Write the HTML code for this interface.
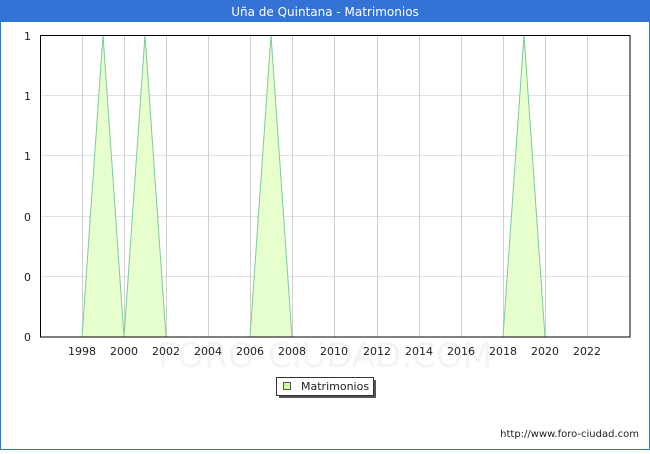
<!DOCTYPE html>
<html><head><meta charset="utf-8"><style>
body{margin:0;width:650px;height:450px;overflow:hidden;background:#fff;font-family:"DejaVu Sans","Liberation Sans",sans-serif}
</style></head><body>
<svg width="650" height="450" xmlns="http://www.w3.org/2000/svg" font-family="DejaVu Sans, Liberation Sans, sans-serif">
<rect x="0.5" y="0.5" width="649" height="449" fill="#fff" stroke="#3373d6"/>
<rect x="0" y="0" width="650" height="22" fill="#3373d6"/>
<text x="325" y="16" fill="#fff" font-size="12" text-anchor="middle">Uña de Quintana - Matrimonios</text>
<text x="325" y="367" fill="#f2f4f8" font-size="34" text-anchor="middle">FORO-CIUDAD.COM</text>
<g stroke="#e0e0e0" stroke-width="1">
<line x1="40" y1="95.5" x2="630" y2="95.5"/><line x1="40" y1="155.5" x2="630" y2="155.5"/><line x1="40" y1="216.5" x2="630" y2="216.5"/><line x1="40" y1="276.5" x2="630" y2="276.5"/>
</g>
<g stroke="#d0d0d0" stroke-width="1">
<line x1="82.5" y1="35" x2="82.5" y2="337"/><line x1="124.5" y1="35" x2="124.5" y2="337"/><line x1="166.5" y1="35" x2="166.5" y2="337"/><line x1="208.5" y1="35" x2="208.5" y2="337"/><line x1="250.5" y1="35" x2="250.5" y2="337"/><line x1="292.5" y1="35" x2="292.5" y2="337"/><line x1="334.5" y1="35" x2="334.5" y2="337"/><line x1="377.5" y1="35" x2="377.5" y2="337"/><line x1="419.5" y1="35" x2="419.5" y2="337"/><line x1="461.5" y1="35" x2="461.5" y2="337"/><line x1="503.5" y1="35" x2="503.5" y2="337"/><line x1="545.5" y1="35" x2="545.5" y2="337"/><line x1="587.5" y1="35" x2="587.5" y2="337"/>
</g>
<g fill="#e6ffcc" stroke="#80c8a0" stroke-width="1">
<polygon points="82,337 103,35 124,337"/>
<polygon points="124,337 145,35 166,337"/>
<polygon points="250,337 271,35 292,337"/>
<polygon points="503,337 524,35 545,337"/>
</g>
<rect x="40.5" y="35.5" width="589.5" height="301.5" fill="none" stroke="#000"/>
<g font-size="11" fill="#222" text-anchor="end">
<text x="31" y="40">1</text><text x="31" y="100">1</text><text x="31" y="160">1</text><text x="31" y="221">0</text><text x="31" y="281">0</text><text x="31" y="341">0</text>
</g>
<g font-size="11" fill="#222" text-anchor="middle">
<text x="82" y="355">1998</text><text x="124" y="355">2000</text><text x="166" y="355">2002</text><text x="208" y="355">2004</text><text x="250" y="355">2006</text><text x="292" y="355">2008</text><text x="334" y="355">2010</text><text x="377" y="355">2012</text><text x="419" y="355">2014</text><text x="461" y="355">2016</text><text x="503" y="355">2018</text><text x="545" y="355">2020</text><text x="587" y="355">2022</text>
</g>
<rect x="279" y="380" width="97" height="18" fill="#555"/>
<rect x="276.5" y="377.5" width="97" height="18" fill="#fff" stroke="#333"/>
<rect x="283.5" y="382.5" width="7" height="7" fill="#ccff99" stroke="#555"/>
<text x="301" y="390" font-size="11" fill="#222">Matrimonios</text>
<text x="639" y="437" font-size="10" fill="#222" text-anchor="end">http://www.foro-ciudad.com</text>
</svg>
</body></html>
